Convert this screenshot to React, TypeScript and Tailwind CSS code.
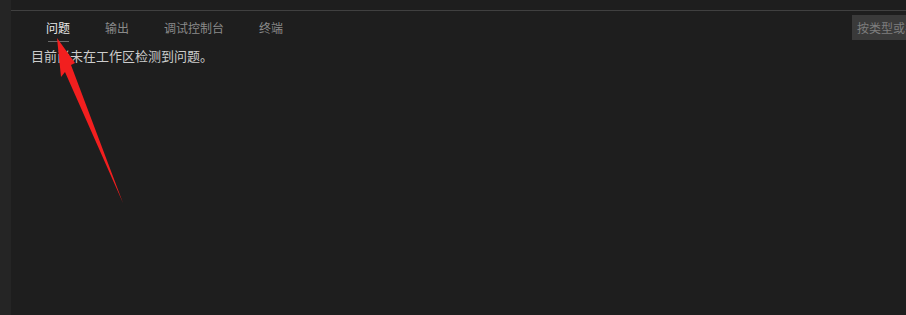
const tabs = ["问题", "输出", "调试控制台", "终端"];

const Arrow = () => (
  <svg className="pointer-events-none absolute left-0 top-0" width="906" height="315" viewBox="0 0 906 315">
    <polygon points="57,38 75,63 71,65 123,203 65,72 61,77" fill="#f21f1f" />
  </svg>
);

export default function App() {
  return (
    <div
      className="relative flex h-[315px] w-[906px] overflow-hidden bg-[#1e1e1e]"
      style={{ fontFamily: '"Noto Sans CJK SC", "Noto Sans", sans-serif' }}
    >
      <div className="w-[11px] shrink-0 bg-[#252525]" />
      <div className="flex min-w-0 flex-1 flex-col pt-[10px]">
        <div className="flex h-[34px] items-start border-t border-[#404040]">
          <div className="flex gap-[35px] pl-[35px]">
            {tabs.map((t, i) => (
              <div key={t} className="flex flex-col items-center pt-[8px]">
                <span
                  className={
                    i === 0
                      ? "text-[12px] leading-[17px] text-[#e8e8e8]"
                      : "text-[12px] leading-[17px] text-[#8a8a8a]"
                  }
                >
                  {t}
                </span>
                {i === 0 && <div className="mt-[5px] h-px w-[21px] bg-[#6a6a6a]" />}
              </div>
            ))}
          </div>
          <div className="flex-1" />
          <div className="mt-[4px] w-[54px] shrink-0 overflow-hidden">
            <div className="flex h-[25px] w-[160px] items-center bg-[#3a3a3a] pl-[5px] text-[12px] text-[#7e7e7e] whitespace-nowrap">
              按类型或名称筛选
            </div>
          </div>
        </div>
        <div className="pl-[20px] pt-[3px] text-[13px] leading-[18px] text-[#cccccc]">
          目前尚未在工作区检测到问题。
        </div>
      </div>
      <Arrow />
    </div>
  );
}
